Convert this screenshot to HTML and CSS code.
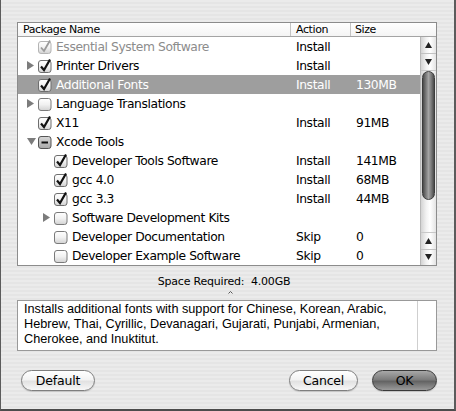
FILE: index.html
```html
<!DOCTYPE html>
<html>
<head>
<meta charset="utf-8">
<link rel="stylesheet" href="styles.css">
</head>
<body>
<svg class="defs" width="0" height="0" aria-hidden="true">
  <defs>
    <linearGradient id="cbg" x1="0" y1="0" x2="0" y2="1">
      <stop offset="0" stop-color="#ffffff"/>
      <stop offset="0.5" stop-color="#f1f1f1"/>
      <stop offset="1" stop-color="#d2d2d2"/>
    </linearGradient>
    <linearGradient id="cbm" x1="0" y1="0" x2="0" y2="1">
      <stop offset="0" stop-color="#d8d8d8"/>
      <stop offset="1" stop-color="#a8a8a8"/>
    </linearGradient>
  </defs>
</svg>
<div class="sheet">
  <div class="table">
    <div class="thead">
      <div class="th">Package Name</div>
      <div class="th">Action</div>
      <div class="th th-size">Size</div>
    </div>
    <div class="tbody">
      <div class="rows">
        <div class="row disabled">
          <div class="name l1"><span class="tri"></span><svg class="cb" width="14" height="14" viewBox="0 0 14 14"><rect x="0.5" y="1.5" width="12.5" height="12" rx="2.5" fill="url(#cbg)" stroke="#b4b4b4"/><path d="M3 7.5 L6 11 L12 0.5" stroke="#9a9a9a" stroke-width="1.8" fill="none"/></svg><span class="label">Essential System Software</span></div>
          <div class="action">Install</div><div class="size"></div>
        </div>
        <div class="row">
          <div class="name l1"><span class="tri"><svg width="7" height="9" viewBox="0 0 7 9"><polygon points="0,0 7,4.5 0,9" fill="#7c7c7c"/></svg></span><svg class="cb" width="14" height="14" viewBox="0 0 14 14"><rect x="0.5" y="1.5" width="12.5" height="12" rx="2.5" fill="url(#cbg)" stroke="#6e6e6e"/><path d="M3 7.5 L6 11 L12 0.5" stroke="#111" stroke-width="2.2" fill="none"/></svg><span class="label">Printer Drivers</span></div>
          <div class="action">Install</div><div class="size"></div>
        </div>
        <div class="row selected">
          <div class="name l1"><span class="tri"></span><svg class="cb" width="14" height="14" viewBox="0 0 14 14"><rect x="0.5" y="1.5" width="12.5" height="12" rx="2.5" fill="url(#cbg)" stroke="#6e6e6e"/><path d="M3 7.5 L6 11 L12 0.5" stroke="#111" stroke-width="2.2" fill="none"/></svg><span class="label">Additional Fonts</span></div>
          <div class="action">Install</div><div class="size">130MB</div>
        </div>
        <div class="row">
          <div class="name l1"><span class="tri"><svg width="7" height="9" viewBox="0 0 7 9"><polygon points="0,0 7,4.5 0,9" fill="#7c7c7c"/></svg></span><svg class="cb" width="14" height="14" viewBox="0 0 14 14"><rect x="0.5" y="1.5" width="12.5" height="12" rx="2.5" fill="url(#cbg)" stroke="#7a7a7a"/></svg><span class="label">Language Translations</span></div>
          <div class="action"></div><div class="size"></div>
        </div>
        <div class="row">
          <div class="name l1"><span class="tri"></span><svg class="cb" width="14" height="14" viewBox="0 0 14 14"><rect x="0.5" y="1.5" width="12.5" height="12" rx="2.5" fill="url(#cbg)" stroke="#6e6e6e"/><path d="M3 7.5 L6 11 L12 0.5" stroke="#111" stroke-width="2.2" fill="none"/></svg><span class="label">X11</span></div>
          <div class="action">Install</div><div class="size">91MB</div>
        </div>
        <div class="row">
          <div class="name l1"><span class="tri"><svg width="9" height="7" viewBox="0 0 9 7"><polygon points="0,0 9,0 4.5,7" fill="#7c7c7c"/></svg></span><svg class="cb" width="14" height="14" viewBox="0 0 14 14"><rect x="0.5" y="1.5" width="12.5" height="12" rx="2.5" fill="url(#cbm)" stroke="#555"/><rect x="3.5" y="6.5" width="6.5" height="2" fill="#111"/></svg><span class="label">Xcode Tools</span></div>
          <div class="action"></div><div class="size"></div>
        </div>
        <div class="row">
          <div class="name l2"><span class="tri"></span><svg class="cb" width="14" height="14" viewBox="0 0 14 14"><rect x="0.5" y="1.5" width="12.5" height="12" rx="2.5" fill="url(#cbg)" stroke="#6e6e6e"/><path d="M3 7.5 L6 11 L12 0.5" stroke="#111" stroke-width="2.2" fill="none"/></svg><span class="label">Developer Tools Software</span></div>
          <div class="action">Install</div><div class="size">141MB</div>
        </div>
        <div class="row">
          <div class="name l2"><span class="tri"></span><svg class="cb" width="14" height="14" viewBox="0 0 14 14"><rect x="0.5" y="1.5" width="12.5" height="12" rx="2.5" fill="url(#cbg)" stroke="#6e6e6e"/><path d="M3 7.5 L6 11 L12 0.5" stroke="#111" stroke-width="2.2" fill="none"/></svg><span class="label">gcc 4.0</span></div>
          <div class="action">Install</div><div class="size">68MB</div>
        </div>
        <div class="row">
          <div class="name l2"><span class="tri"></span><svg class="cb" width="14" height="14" viewBox="0 0 14 14"><rect x="0.5" y="1.5" width="12.5" height="12" rx="2.5" fill="url(#cbg)" stroke="#6e6e6e"/><path d="M3 7.5 L6 11 L12 0.5" stroke="#111" stroke-width="2.2" fill="none"/></svg><span class="label">gcc 3.3</span></div>
          <div class="action">Install</div><div class="size">44MB</div>
        </div>
        <div class="row">
          <div class="name l2"><span class="tri"><svg width="7" height="9" viewBox="0 0 7 9"><polygon points="0,0 7,4.5 0,9" fill="#7c7c7c"/></svg></span><svg class="cb" width="14" height="14" viewBox="0 0 14 14"><rect x="0.5" y="1.5" width="12.5" height="12" rx="2.5" fill="url(#cbg)" stroke="#7a7a7a"/></svg><span class="label">Software Development Kits</span></div>
          <div class="action"></div><div class="size"></div>
        </div>
        <div class="row">
          <div class="name l2"><span class="tri"></span><svg class="cb" width="14" height="14" viewBox="0 0 14 14"><rect x="0.5" y="1.5" width="12.5" height="12" rx="2.5" fill="url(#cbg)" stroke="#7a7a7a"/></svg><span class="label">Developer Documentation</span></div>
          <div class="action">Skip</div><div class="size">0</div>
        </div>
        <div class="row">
          <div class="name l2"><span class="tri"></span><svg class="cb" width="14" height="14" viewBox="0 0 14 14"><rect x="0.5" y="1.5" width="12.5" height="12" rx="2.5" fill="url(#cbg)" stroke="#7a7a7a"/></svg><span class="label">Developer Example Software</span></div>
          <div class="action">Skip</div><div class="size">0</div>
        </div>
      </div>
      <div class="scrollbar">
        <div class="sarrows top">
          <div class="sarrow"><svg width="7" height="6" viewBox="0 0 7 6"><polygon points="3.5,0 7,6 0,6" fill="#222"/></svg></div>
          <div class="sarrow"><svg width="7" height="6" viewBox="0 0 7 6"><polygon points="0,0 7,0 3.5,6" fill="#222"/></svg></div>
        </div>
        <div class="strack"><div class="thumb"></div></div>
        <div class="sarrows">
          <div class="sarrow"><svg width="7" height="6" viewBox="0 0 7 6"><polygon points="3.5,0 7,6 0,6" fill="#222"/></svg></div>
          <div class="sarrow"><svg width="7" height="6" viewBox="0 0 7 6"><polygon points="0,0 7,0 3.5,6" fill="#222"/></svg></div>
        </div>
      </div>
    </div>
  </div>
  <div class="space">Space Required:&nbsp; 4.00GB</div>
  <div class="grip"><svg width="5" height="3" viewBox="0 0 5 3"><polyline points="0.5,2.5 2.5,0.5 4.5,2.5" stroke="#555" stroke-width="1" fill="none"/></svg></div>
  <div class="desc">
    <p class="desc-text">Installs additional fonts with support for Chinese, Korean, Arabic, Hebrew, Thai, Cyrillic, Devanagari, Gujarati, Punjabi, Armenian, Cherokee, and Inuktitut.</p>
    <div class="desc-scroll"></div>
  </div>
  <div class="buttons">
    <button class="btn btn-default">Default</button>
    <span class="spacer"></span>
    <button class="btn btn-cancel">Cancel</button>
    <button class="btn btn-ok">OK</button>
  </div>
</div>
</body>
</html>
```

FILE: styles.css
```css
* { box-sizing: border-box; }
html, body { margin: 0; padding: 0; }
body {
  width: 456px;
  height: 411px;
  overflow: hidden;
  font-family: "DejaVu Sans", sans-serif;
  background: #e8e8e8;
}
.defs { position: absolute; width: 0; height: 0; }
.sheet {
  width: 456px;
  height: 411px;
  border-left: 1px solid #5c5c5c;
  border-right: 2px solid #5c5c5c;
  border-bottom: 2px solid #4c4c4c;
  background: repeating-linear-gradient(to bottom, #ebebeb 0 2px, #e5e5e5 2px 4px);
  display: flex;
  flex-direction: column;
  padding: 22px 0 0 16px;
}
.table {
  width: 420px;
  height: 244px;
  border: 1px solid #8c8c8c;
  background: #fff;
  display: flex;
  flex-direction: column;
}
.thead {
  height: 14px;
  display: grid;
  grid-template-columns: 273px 60px 1fr;
  border-bottom: 1px solid #a4a4a4;
  background: linear-gradient(#ffffff, #f4f4f4);
  font-size: 11px;
  line-height: 13px;
  letter-spacing: -0.4px;
  color: #000;
}
.th {
  padding-left: 5px;
  border-right: 1px solid #c4c4c4;
  white-space: nowrap;
}
.th-size { border-right: none; padding-left: 4px; }
.tbody { flex: 1; display: flex; }
.rows { width: 402px; }
.row {
  height: 19px;
  display: grid;
  grid-template-columns: 273px 60px 69px;
  align-items: center;
  font-size: 12.3px;
  letter-spacing: -0.4px;
  color: #000;
  white-space: nowrap;
}
.row.disabled .label { color: #8c8c8c; }
.row.selected { background: #9e9e9e; color: #fff; }
.name { display: flex; align-items: center; height: 19px; }
.name.l1 { padding-left: 8px; }
.name.l2 { padding-left: 24px; }
.tri {
  width: 12px;
  height: 19px;
  display: flex;
  align-items: center;
  padding-left: 1px;
  flex: none;
}
.cb { flex: none; margin-right: 4px; overflow: visible; }
.action { padding-left: 5px; }
.size { padding-left: 5px; }
.scrollbar {
  width: 16px;
  border-left: 1px solid #b8b8b8;
  display: flex;
  flex-direction: column;
  background: linear-gradient(to right, #d4d4d4, #f2f2f2 35%, #ffffff 60%, #e4e4e4);
}
.sarrows { height: 32px; display: flex; flex-direction: column; }
.sarrows.top { height: 33px; }
.sarrow { flex: 1; display: flex; align-items: center; justify-content: center; }
.sarrow + .sarrow { border-top: 1px solid #c2c2c2; }
.strack {
  flex: 1;
  display: flex;
  flex-direction: column;
  border-top: 1px solid #c8c8c8;
  border-bottom: 1px solid #c8c8c8;
}
.thumb {
  height: 129px;
  margin: 0 1px;
  border-radius: 7px;
  border: 1px solid #3c3c3c;
  background: linear-gradient(to right, #4a4a4a, #777 25%, #a4a4a4 50%, #7a7a7a 75%, #4a4a4a);
}
.space {
  width: 420px;
  margin-top: 9px;
  font-size: 11px;
  line-height: 13px;
  letter-spacing: -0.2px;
  text-align: center;
  padding-right: 6px;
  color: #000;
}
.grip {
  width: 420px;
  height: 9px;
  display: flex;
  justify-content: center;
  align-items: center;
  padding-left: 6px;
}
.desc {
  width: 420px;
  height: 51px;
  margin-top: 3px;
  border: 1px solid #999;
  background: #fff;
  display: flex;
}
.desc-text {
  margin: 0;
  flex: 1;
  padding: 1px 0 0 6px;
  font-family: "Liberation Sans", Arial, sans-serif;
  font-size: 12.7px;
  line-height: 15px;
  color: #000;
}
.desc-scroll { width: 19px; border-left: 1px solid #cfcfcf; }
.buttons {
  width: 420px;
  margin-top: 19px;
  display: flex;
  align-items: center;
  padding-left: 4px;
}
.spacer { flex: 1; }
.btn {
  height: 21px;
  border-radius: 11px;
  border: 1px solid #7e7e7e;
  background: linear-gradient(#ffffff, #f3f3f3 45%, #e2e2e2 55%, #f7f7f7);
  font-family: "DejaVu Sans", sans-serif;
  font-size: 12.5px;
  letter-spacing: -0.2px;
  color: #000;
  padding: 0;
  box-shadow: 0 1px 1px rgba(0,0,0,0.15);
}
.btn-default { width: 74px; }
.btn-cancel { width: 69px; margin-right: 14px; }
.btn-ok {
  width: 65px;
  border-color: #3a3a3a;
  background: linear-gradient(#a8a8a8, #7c7c7c 45%, #646464 55%, #9a9a9a);
}
```
